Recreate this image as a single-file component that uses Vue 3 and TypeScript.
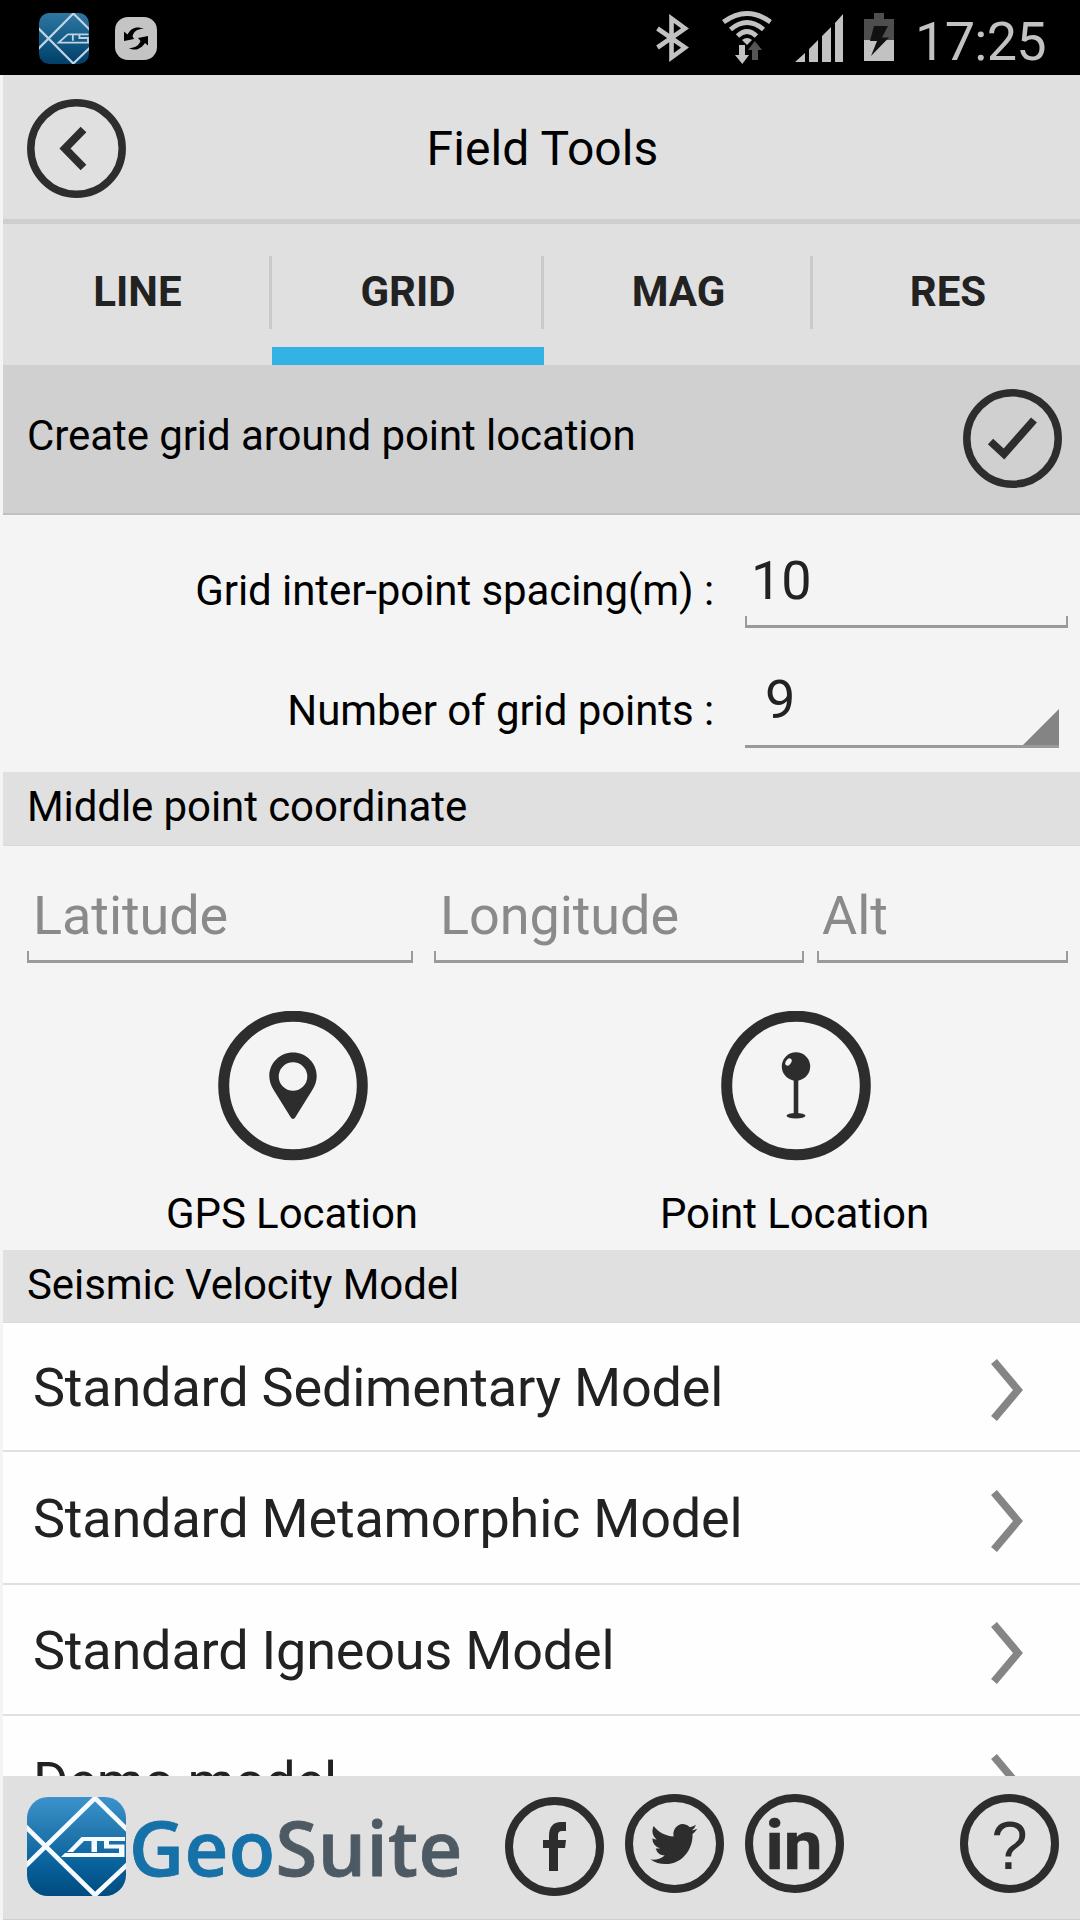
<script setup lang="ts">
import { ref } from 'vue'

interface Tab {
  id: string
  width: number
}

interface Model {
  name: string
  height: number
}

const tabs: Tab[] = [
  { id: 'LINE', width: 269 },
  { id: 'GRID', width: 272 },
  { id: 'MAG', width: 269 },
  { id: 'RES', width: 270 },
]
const activeTab = ref('GRID')

const models: Model[] = [
  { name: 'Standard Sedimentary Model', height: 129 },
  { name: 'Standard Metamorphic Model', height: 133 },
  { name: 'Standard Igneous Model', height: 131 },
  { name: 'Demo model', height: 132 },
]
</script>

<template>
  <div class="screen">
    <div class="status">
      <svg class="status-app" width="50" height="51" viewBox="0 0 99 99" preserveAspectRatio="none">
        <defs>
          <linearGradient id="markDim" x1="0" y1="0" x2="0" y2="1">
            <stop offset="0" stop-color="#2d77a2" />
            <stop offset="0.5" stop-color="#145d88" />
            <stop offset="1" stop-color="#003f68" />
          </linearGradient>
          <clipPath id="markClipDim"><rect width="99" height="99" rx="20" /></clipPath>
        </defs>
        <g clip-path="url(#markClipDim)" fill="none" stroke="#c3d3e4" stroke-width="4.4">
          <rect width="99" height="99" fill="url(#markDim)" stroke="none" />
          <path d="M-2 70 68 1 101 33M-2 29 68 98 101 67" />
          <path d="M57 41.5 39 57.5H99M57 41.5H78M67 41.5V54M98 41.5H80V48.5H97V57.5" stroke-width="3.6" />
        </g>
      </svg>
      <svg class="status-sync" width="42" height="43" viewBox="0 0 42 43">
        <rect width="42" height="43" rx="13" fill="#c4c4c4" />
        <path d="M9 14.5 12.5 17.500C16 11 22 8.500 29 12 23 11.500 19 14 17.500 19L19 22 9 24Z" fill="#000" />
        <path d="M33 19V28.500L30 26C26 32 20 34.500 14 31 20 31 24 28.500 25.500 24L23 21Z" fill="#000" />
      </svg>
      <span class="spacer"></span>
      <svg class="status-icons" width="240" height="60" viewBox="655 10 240 60">
        <path d="M657.500 28.500 685 47.500 671.500 57.500V18.500L685 28.500 657.500 47.500" fill="none" stroke="#c2c2c2" stroke-width="4.600" />
        <g fill="none" stroke="#c2c2c2" stroke-width="4.800">
          <path d="M723.500 22Q747 5 770.500 22" />
          <path d="M730.500 29.500Q747 15.500 763.500 29.500" />
          <path d="M737.500 36Q747 27 756.500 36" />
        </g>
        <path d="M742 40Q747 36 752 40L747 45Z" fill="#c2c2c2" />
        <path d="M739 45H745V55H749L742.300 64 735 55H739Z" fill="#c2c2c2" />
        <path d="M752 60V50H748L754.800 41 762 50H758V60Z" fill="#555" />
        <path d="M795 62 805 53V62ZM809 49 818 40V62H809ZM822 36 831 27V62H822ZM835 23 843 14V62H835Z" fill="#c2c2c2" />
        <path d="M864 19H874V13H884V19H894V40H864Z" fill="#4e4e4e" />
        <path d="M864 40H894V61H864Z" fill="#c2c2c2" />
        <path d="M874 26H888L882 37.500H889L871 56 877 41H870Z" fill="#111" />
      </svg>
      <span class="clock">17:25</span>
    </div>

    <div class="app">
      <header class="header">
        <svg class="back" width="99" height="99" viewBox="0 0 99 99" fill="none" stroke="#2d2d2d">
          <circle cx="49.500" cy="49.500" r="45.700" stroke-width="7.500" />
          <path d="M56.500 30.500 38 49.500 56.500 68.500" stroke-width="8" />
        </svg>
        <h1>Field Tools</h1>
      </header>

      <nav class="tabs">
        <button
          v-for="tab in tabs"
          :key="tab.id"
          class="tab"
          :class="{ active: tab.id === activeTab }"
          :style="{ width: tab.width + 'px' }"
          @click="activeTab = tab.id"
        >
          <span class="tab-label">{{ tab.id }}</span>
          <i class="tab-divider"></i>
        </button>
      </nav>

      <section class="create">
        <span class="create-text">Create grid around point location</span>
        <svg width="99" height="99" viewBox="0 0 99 99" fill="none" stroke="#2d2d2d">
          <circle cx="49.500" cy="49.500" r="45.700" stroke-width="7.500" />
          <path d="M27.500 52.500 41 65 71 31" stroke-width="7.800" />
        </svg>
      </section>

      <section class="form">
        <div class="row">
          <label>Grid inter-point spacing(m) :</label>
          <div class="field spacing">
            <span class="value">10</span>
            <i class="tray"></i>
          </div>
        </div>
        <div class="row">
          <label>Number of grid points :</label>
          <div class="field spinner">
            <span class="value">9</span>
            <i class="corner"></i>
          </div>
        </div>
      </section>

      <h2 class="bar first">Middle point coordinate</h2>

      <section class="coords">
        <div class="field lat"><span class="hint">Latitude</span><i class="tray"></i></div>
        <div class="field lon"><span class="hint">Longitude</span><i class="tray"></i></div>
        <div class="field alt"><span class="hint">Alt</span><i class="tray"></i></div>
      </section>

      <section class="actions">
        <div class="action gps">
          <svg width="150" height="150" viewBox="0 0 150 150">
            <circle cx="75" cy="74.500" r="69.300" fill="none" stroke="#2d2d2d" stroke-width="11" />
            <path fill="#2d2d2d" fill-rule="evenodd" d="M75 41.500C88 41.500 98.700 52 98.700 65 98.700 70 97 75 94 79.500L77.500 106Q75 110 72.500 106L56 79.500C53 75 51.300 70 51.300 65 51.300 52 62 41.500 75 41.500ZM75 51.200A14.300 14.300 0 1 0 75 79.800 14.300 14.300 0 1 0 75 51.200Z" />
          </svg>
          <span>GPS Location</span>
        </div>
        <div class="action point">
          <svg width="150" height="150" viewBox="0 0 150 150">
            <circle cx="75" cy="74.500" r="69.300" fill="none" stroke="#2d2d2d" stroke-width="11" />
            <circle cx="75" cy="55.500" r="14.200" fill="#2d2d2d" />
            <path d="M72.700 68H77.300V104H72.700Z" fill="#2d2d2d" />
            <ellipse cx="75" cy="104.700" rx="9.500" ry="2.800" fill="#2d2d2d" />
            <ellipse cx="67.500" cy="51" rx="2.600" ry="4" transform="rotate(35 67.500 51)" fill="#f4f4f4" />
          </svg>
          <span>Point Location</span>
        </div>
      </section>

      <h2 class="bar second">Seismic Velocity Model</h2>

      <ul class="models">
        <li v-for="model in models" :key="model.name" :style="{ height: model.height + 'px' }">
          <span>{{ model.name }}</span>
          <svg width="34" height="62" viewBox="0 0 34 62" fill="none" stroke="#858585" stroke-width="7.600">
            <path d="M3 2.500 27 31 3 59.500" />
          </svg>
        </li>
      </ul>

      <footer class="footer">
        <svg class="mark" width="99" height="99" viewBox="0 0 99 99">
          <defs>
            <linearGradient id="mark" x1="0" y1="0" x2="0" y2="1">
              <stop offset="0" stop-color="#3c93cc" />
              <stop offset="0.350" stop-color="#2379af" />
              <stop offset="0.700" stop-color="#08609a" />
              <stop offset="1" stop-color="#004b7f" />
            </linearGradient>
            <clipPath id="markClip"><rect width="99" height="99" rx="21" /></clipPath>
          </defs>
          <g clip-path="url(#markClip)" fill="none" stroke="#f6fbff" stroke-width="4.600">
            <rect width="99" height="99" fill="url(#mark)" stroke="none" />
            <path d="M-2 69.500 68 1 101 33.500M-2 29 68 98 101 67" />
            <path d="M34 60 38 56H92V51.500H77V40H98V44H82V47.500H97.500V60ZM40 55 54.500 40H78V44H70V55H64.500V44H57L46 55Z" fill="#f6fbff" stroke="none" />
          </g>
        </svg>
        <span class="brand"><b>Geo</b><b class="suite">Suite</b></span>
        <svg class="fb" width="99" height="99" viewBox="0 0 99 99">
          <circle cx="49.500" cy="49.500" r="45.500" fill="none" stroke="#2d2d2d" stroke-width="8" />
          <path d="M44 74V51H38V43H44V39C44 30 48 25 56 25H61V34H57Q53 34 53 38V43H61L60 51H53V74Z" fill="#2d2d2d" />
        </svg>
        <svg class="tw" width="99" height="99" viewBox="0 0 99 99">
          <circle cx="49.500" cy="49.500" r="45.500" fill="none" stroke="#2d2d2d" stroke-width="8" />
          <path transform="translate(25.500 25.500) scale(1.950 2.050)" fill="#2d2d2d" d="M24 4.557a9.830 9.830 0 0 1-2.828.775 4.932 4.932 0 0 0 2.165-2.724 9.864 9.864 0 0 1-3.127 1.195 4.916 4.916 0 0 0-8.384 4.482C7.691 8.094 4.066 6.130 1.640 3.161a4.822 4.822 0 0 0-.666 2.475c0 1.708.870 3.213 2.188 4.096a4.904 4.904 0 0 1-2.228-.616v.061a4.923 4.923 0 0 0 3.946 4.827 4.996 4.996 0 0 1-2.212.085 4.937 4.937 0 0 0 4.604 3.417 9.868 9.868 0 0 1-6.102 2.105c-.390 0-.779-.023-1.170-.067a13.995 13.995 0 0 0 7.557 2.209c9.054 0 14-7.503 14-14.001 0-.210 0-.423-.015-.637A9.936 9.936 0 0 0 24 4.557z" />
        </svg>
        <svg class="li" width="99" height="99" viewBox="0 0 99 99">
          <circle cx="49.500" cy="49.500" r="45.500" fill="none" stroke="#2d2d2d" stroke-width="8" />
          <text x="20.500" y="74.500" font-size="68" font-weight="700" textLength="57" lengthAdjust="spacingAndGlyphs" fill="#2d2d2d" stroke="#2d2d2d" stroke-width="0.600">in</text>
        </svg>
        <svg class="help" width="99" height="99" viewBox="0 0 99 99">
          <circle cx="49.500" cy="49.500" r="45.500" fill="none" stroke="#2d2d2d" stroke-width="8" />
          <text transform="translate(49.500 74.500) scale(0.950 1)" font-size="69" text-anchor="middle" fill="#2d2d2d">?</text>
        </svg>
      </footer>
    </div>
  </div>
</template>

<style>
body {
  margin: 0;
  overflow: hidden;
}
</style>

<style scoped>
.screen {
  width: 1080px;
  height: 1920px;
  overflow: hidden;
  display: flex;
  flex-direction: column;
  background: #f4f4f4;
  font-family: Roboto, sans-serif;
  font-size: 42px;
  letter-spacing: -0.080px;
  color: #000;
}
.screen * {
  box-sizing: border-box;
}
.status {
  height: 75px;
  flex: none;
  display: flex;
  align-items: flex-start;
  background: #000;
  padding-left: 39px;
}
.status-app {
  margin-top: 13px;
}
.status-sync {
  margin: 17px 0 0 26px;
}
.spacer {
  flex: 1;
}
.status-icons {
  margin-top: 10px;
}
.clock {
  width: 165px;
  margin-left: 20px;
  font-size: 54px;
  letter-spacing: -0.700px;
  line-height: 83px;
  color: #c2c2c2;
  flex: none;
}
.app {
  flex: 1;
  min-height: 0;
  margin-left: 3px;
  display: flex;
  flex-direction: column;
}
.app > * {
  flex: none;
}
.header {
  height: 149px;
  display: flex;
  padding: 24px 0 0 24px;
  background: #e0e0e0;
  border-bottom: 5px solid #cecece;
}
h1 {
  flex: 1;
  margin: 0;
  padding-right: 121px;
  text-align: center;
  font-size: 48px;
  letter-spacing: 0.100px;
  font-weight: 400;
  line-height: 99px;
}
.tabs {
  height: 141px;
  display: flex;
  background: #e0e0e0;
}
.tab {
  flex: none;
  display: flex;
  align-items: flex-start;
  border: 0;
  padding: 0;
  background: none;
  font: 700 42px Roboto, sans-serif;
  color: #222;
}
.tab-label {
  flex: 1;
  height: 141px;
  line-height: 136px;
}
.tab-divider {
  width: 3px;
  height: 73px;
  margin: 32px 0 0 -3px;
  background: #cacaca;
}
.tab.active .tab-label {
  border-bottom: 18px solid #33b2e5;
}
.create {
  height: 150px;
  display: flex;
  justify-content: space-between;
  padding: 24px 18px 0 24px;
  background: #d0d0d0;
  border-bottom: 2px solid #c0c0c0;
}
.create-text {
  line-height: 93px;
}
.form {
  height: 257px;
  padding-top: 16px;
  display: flex;
  flex-direction: column;
  gap: 23px;
}
.row {
  display: flex;
  height: 97px;
}
.row label {
  width: 711px;
  margin-right: 31px;
  padding-top: 22px;
  line-height: 76px;
  text-align: right;
}
.field {
  display: flex;
  flex-direction: column;
  justify-content: space-between;
  font-size: 54px;
}
.tray {
  height: 12px;
  border: solid #9a9a9a;
  border-width: 0 2px 3px;
}
.spacing {
  width: 323px;
}
.value {
  color: #222;
  height: 83px;
  line-height: 99px;
  padding-left: 6px;
}
.spinner {
  width: 314px;
  flex-direction: row;
  align-items: flex-end;
  border-bottom: 3px solid #9a9a9a;
}
.spinner .value {
  height: 94px;
  line-height: 97px;
  padding-left: 20px;
}
.corner {
  width: 36px;
  height: 36px;
  background: #848484;
  clip-path: polygon(100% 0, 100% 100%, 0 100%);
}
.bar {
  margin: 0;
  padding-left: 24px;
  background: #e0e0e0;
  border-bottom: 1px solid #d9d9d9;
  font-size: 42px;
  font-weight: 400;
}
.first {
  height: 74px;
  line-height: 70px;
}
.second {
  height: 73px;
  line-height: 69px;
}
.coords {
  display: flex;
  height: 117px;
  padding-left: 24px;
}
.hint {
  color: #8a8a8a;
  padding-left: 6px;
  line-height: 139px;
  height: 105px;
}
.lat {
  width: 386px;
}
.lon {
  width: 370px;
  margin: 0 13px 0 21px;
}
.alt {
  width: 251px;
}
.alt .hint {
  padding-left: 5px;
}
.actions {
  height: 287px;
  padding-top: 48px;
  display: flex;
}
.action {
  display: flex;
  flex-direction: column;
  align-items: center;
}
.action span {
  line-height: 61px;
  margin-top: 22px;
  padding-right: 2px;
}
.gps {
  width: 580px;
}
.point {
  width: 425px;
}
.models {
  height: 453px;
  overflow: hidden;
  margin: 0;
  padding: 0;
  list-style: none;
  background: #fefefe;
  font-size: 54px;
  letter-spacing: -0.200px;
  color: #222;
}
.models li {
  display: flex;
  justify-content: space-between;
  align-items: center;
  border-bottom: 2px solid #e0e0e0;
  padding: 2px 55px 0 30px;
}
.models span {
  line-height: 64px;
}
.models svg {
  margin-top: 5px;
}
.footer {
  height: 144px;
  display: flex;
  align-items: flex-start;
  background: #e0e0e0;
  border-bottom: 1px solid #cfcfcf;
  padding: 18px 0 0 24px;
}
.footer svg {
  flex: none;
}
.mark {
  margin-top: 3px;
}
.brand {
  width: 373px;
  padding-left: 3px;
  margin-right: 6px;
  font-family: 'Open Sans', sans-serif;
  font-size: 76px;
  line-height: 106px;
  letter-spacing: 0.400px;
  color: #1571a8;
  -webkit-text-stroke: 0.800px currentColor;
  white-space: nowrap;
}
.brand b {
  font-weight: 600;
}
.brand .suite {
  color: #4d5a63;
}
.fb {
  margin-top: 3px;
}
.tw {
  margin-left: 21px;
}
.li {
  margin-left: 21px;
  font-family: Roboto, sans-serif;
}
.help {
  margin-left: 116px;
  font-family: 'Liberation Sans', sans-serif;
}
</style>
